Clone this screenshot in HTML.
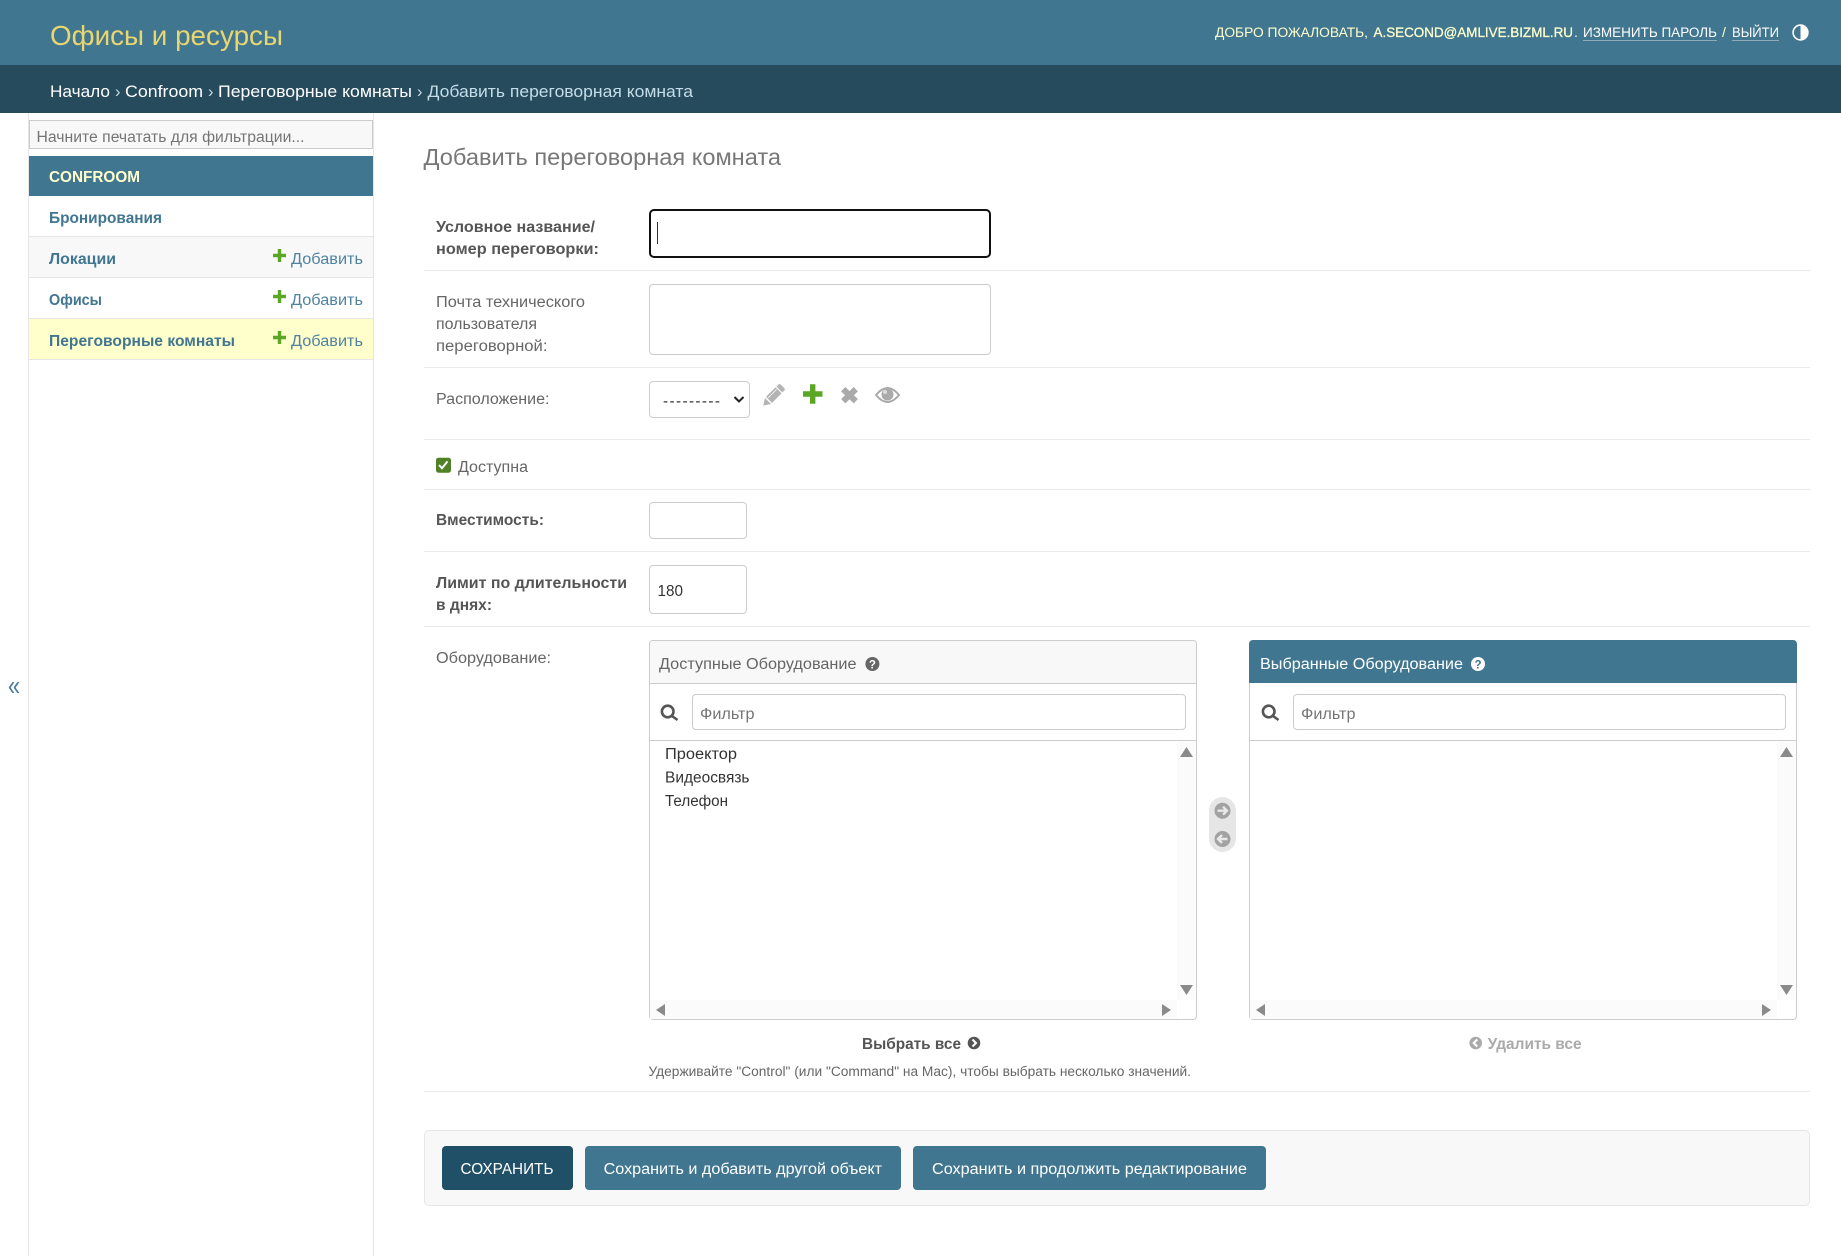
<!DOCTYPE html>
<html lang="ru">
<head>
<meta charset="utf-8">
<title>Добавить переговорная комната</title>
<style>
html,body{margin:0;padding:0;background:#fff}
body{position:relative;width:1841px;height:1256px;overflow:hidden;font-family:"Liberation Sans","Noto Sans CJK SC",sans-serif}
.b{position:absolute;box-sizing:border-box}
input.b{margin:0;padding:0;background:#fff;outline:none;border:1px solid #ccc;border-radius:4px}
.sep{position:absolute;left:424px;width:1386px;height:1px;background:#eaeaea}
.btn{position:absolute;top:1146px;height:44px;border-radius:4px;background:#417690}
svg{position:absolute;left:0;top:0}
text{font-family:"Liberation Sans","Noto Sans CJK SC",sans-serif;font-size:15.3px}
.l{fill:#666}.s{fill:#555;font-weight:700}
.n{fill:#417690;font-weight:700}.a{fill:#4f83a0}
.h{font-size:14.1px;fill:#ffc}
.c{font-size:16.4px;fill:#fff}
.w{fill:#fff}
</style>
</head>
<body>
<div class="b" style="left:0;top:0;width:1841px;height:65px;background:#417690"></div>
<div class="b" style="left:0;top:65px;width:1841px;height:48px;background:#264b5d"></div>

<div class="b" style="left:28px;top:113px;width:346px;height:1143px;border-left:1px solid #e6e6e6;border-right:1px solid #e6e6e6"></div>
<input class="b" style="left:29px;top:120px;width:344px;height:29px;background:#f8f8f8;border-radius:0;border:1px solid #ccc">
<div class="b" style="left:29px;top:156px;width:344px;height:40px;background:#417690"></div>
<div class="b" style="left:29px;top:196px;width:344px;height:41px;border-bottom:1px solid #e6e6e6"></div>
<div class="b" style="left:29px;top:237px;width:344px;height:41px;background:#f8f8f8;border-bottom:1px solid #e6e6e6"></div>
<div class="b" style="left:29px;top:278px;width:344px;height:41px;border-bottom:1px solid #e6e6e6"></div>
<div class="b" style="left:29px;top:319px;width:344px;height:41px;background:#ffc;border-bottom:1px solid #e6e6e6"></div>

<input class="b" style="left:649px;top:209px;width:342px;height:49px;border:2px solid #111;border-radius:5px">
<div class="b" style="left:657px;top:222px;width:1px;height:22px;background:#333"></div>
<div class="sep" style="top:270px"></div>
<input class="b" style="left:649px;top:284px;width:342px;height:71px">
<div class="sep" style="top:367px"></div>
<div class="b" style="left:649px;top:381px;width:101px;height:37px;border:1px solid #ccc;border-radius:4px;background:#fff"></div>
<div class="sep" style="top:439px"></div>
<div class="sep" style="top:489px"></div>
<input class="b" style="left:649px;top:502px;width:98px;height:37px">
<div class="sep" style="top:551px"></div>
<input class="b" style="left:649px;top:565px;width:98px;height:49px">
<div class="sep" style="top:626px"></div>

<div class="b" style="left:649px;top:640px;width:548px;height:380px;border:1px solid #ccc;border-radius:4px;background:#fff"></div>
<div class="b" style="left:650px;top:641px;width:546px;height:43px;background:#f8f8f8;border-bottom:1px solid #ccc;border-radius:3px 3px 0 0"></div>
<input class="b" style="left:692px;top:694px;width:494px;height:36px">
<div class="b" style="left:650px;top:740px;width:546px;height:1px;background:#ccc"></div>
<div class="b" style="left:1177px;top:741px;width:19px;height:259px;background:#fbfbfb"></div>
<div class="b" style="left:650px;top:1000px;width:527px;height:19px;background:#fbfbfb"></div>

<div class="b" style="left:1249px;top:640px;width:548px;height:380px;border:1px solid #ccc;border-radius:4px;background:#fff"></div>
<div class="b" style="left:1249px;top:640px;width:548px;height:43px;background:#417690;border-radius:4px 4px 0 0"></div>
<input class="b" style="left:1293px;top:694px;width:493px;height:36px">
<div class="b" style="left:1250px;top:740px;width:546px;height:1px;background:#ccc"></div>
<div class="b" style="left:1777px;top:741px;width:19px;height:259px;background:#fbfbfb"></div>
<div class="b" style="left:1250px;top:1000px;width:527px;height:19px;background:#fbfbfb"></div>

<div class="b" style="left:1209px;top:797px;width:27px;height:55px;border-radius:14px;background:#e6e6e6"></div>
<div class="sep" style="top:1091px"></div>
<div class="b" style="left:424px;top:1130px;width:1386px;height:76px;background:#f8f8f8;border:1px solid #e6e6e6;border-radius:5px"></div>
<div class="btn" style="left:442px;width:131px;background:#205067"></div>
<div class="btn" style="left:585px;width:316px"></div>
<div class="btn" style="left:913px;width:353px"></div>

<svg width="1841" height="1256" viewBox="0 0 1841 1256" xmlns="http://www.w3.org/2000/svg">
<!-- header -->
<text x="50" y="45" textLength="233" lengthAdjust="spacingAndGlyphs" style="font-size:28.2px;fill:#e8d670">Офисы и ресурсы</text>
<text class="h" x="1215" y="37" textLength="153" lengthAdjust="spacingAndGlyphs">ДОБРО ПОЖАЛОВАТЬ,</text>
<text class="h" x="1373.5" y="37" textLength="199.5" lengthAdjust="spacingAndGlyphs" style="stroke:#ffc;stroke-width:.3">A.SECOND@AMLIVE.BIZML.RU</text>
<text class="h" x="1574" y="37">.</text>
<text class="h" x="1583" y="37" textLength="134" lengthAdjust="spacingAndGlyphs" style="fill:#fff">ИЗМЕНИТЬ ПАРОЛЬ</text>
<text class="h" x="1722" y="37" style="fill:#ffc">/</text>
<text class="h" x="1732" y="37" textLength="47" lengthAdjust="spacingAndGlyphs" style="fill:#fff">ВЫЙТИ</text>
<rect x="1583" y="40" width="134" height="1" fill="#8fabb9"/>
<rect x="1732" y="40" width="47" height="1" fill="#8fabb9"/>
<circle cx="1800.5" cy="32.5" r="7.4" fill="none" stroke="#fff" stroke-width="1.6"/>
<path d="M1800.5 25a7.5 7.5 0 0 1 0 15z" fill="#fff"/>
<!-- breadcrumbs -->
<text class="c" x="50" y="97" textLength="60" lengthAdjust="spacingAndGlyphs">Начало</text>
<text class="c" x="115" y="97" style="fill:#c4dce8">›</text>
<text class="c" x="125" y="97" textLength="78" lengthAdjust="spacingAndGlyphs">Confroom</text>
<text class="c" x="208" y="97" style="fill:#c4dce8">›</text>
<text class="c" x="218" y="97" textLength="194" lengthAdjust="spacingAndGlyphs">Переговорные комнаты</text>
<text class="c" x="417" y="97" style="fill:#c4dce8">›</text>
<text class="c" x="427.5" y="97" textLength="265.5" lengthAdjust="spacingAndGlyphs" style="fill:#c4dce8">Добавить переговорная комната</text>
<!-- sidebar -->
<text x="36.5" y="142" textLength="268" lengthAdjust="spacingAndGlyphs" style="fill:#757575">Начните печатать для фильтрации...</text>
<text x="49" y="182" textLength="91" lengthAdjust="spacingAndGlyphs" style="fill:#ffffcc;font-weight:700;font-size:15.3px">CONFROOM</text>
<text class="n" x="49" y="223" textLength="113" lengthAdjust="spacingAndGlyphs">Бронирования</text>
<text class="n" x="49" y="264" textLength="67" lengthAdjust="spacingAndGlyphs">Локации</text>
<text class="n" x="49" y="305" textLength="53" lengthAdjust="spacingAndGlyphs">Офисы</text>
<text class="n" x="49" y="346" textLength="186" lengthAdjust="spacingAndGlyphs">Переговорные комнаты</text>
<text class="a" x="291" y="264" textLength="72" lengthAdjust="spacingAndGlyphs">Добавить</text>
<text class="a" x="291" y="305" textLength="72" lengthAdjust="spacingAndGlyphs">Добавить</text>
<text class="a" x="291" y="346" textLength="72" lengthAdjust="spacingAndGlyphs">Добавить</text>
<g fill="none" stroke="#5ca625" stroke-width="3.4">
<path d="M273 255.5h13M279.5 249v13"/>
<path d="M273 296.5h13M279.5 290v13"/>
<path d="M273 337.5h13M279.5 331v13"/>
</g>
<text x="8" y="695" textLength="12" lengthAdjust="spacingAndGlyphs" style="font-size:28px;fill:#447e9b">«</text>
<!-- main -->
<text x="423.5" y="165" textLength="357.5" lengthAdjust="spacingAndGlyphs" style="font-size:23.5px;fill:#777">Добавить переговорная комната</text>
<text class="s" x="436" y="232" textLength="159" lengthAdjust="spacingAndGlyphs">Условное название/</text>
<text class="s" x="436" y="254" textLength="163" lengthAdjust="spacingAndGlyphs">номер переговорки:</text>
<text class="l" x="436" y="307" textLength="149" lengthAdjust="spacingAndGlyphs">Почта технического</text>
<text class="l" x="436" y="329" textLength="101" lengthAdjust="spacingAndGlyphs">пользователя</text>
<text class="l" x="436" y="351" textLength="111.5" lengthAdjust="spacingAndGlyphs">переговорной:</text>
<text class="l" x="436" y="404" textLength="113.5" lengthAdjust="spacingAndGlyphs">Расположение:</text>
<text x="663" y="406" textLength="57" lengthAdjust="spacing" style="fill:#333">---------</text>
<path d="M734.5 397l4.5 4.5 4.5-4.5" fill="none" stroke="#222" stroke-width="2"/>
<!-- related icons -->
<g fill="#b4b4b4" stroke="none">
<path d="M763.2 405.6l1.8-7.6 6 6z"/>
<path d="M766 396.8l12.6-12.4q1-.8 1.9 0l4 4q.8 1 0 1.9L772 403z"/>
</g>
<path d="M775.5 386.5l7 7" stroke="#fff" stroke-width="1.2" fill="none"/>
<path d="M768 398l8.5-8.5" stroke="#fff" stroke-width=".8" fill="none"/>
<path d="M803 394h19.5M812.7 384.2v19.6" stroke="#5ca625" stroke-width="5.4" fill="none" stroke-linejoin="round"/>
<path d="M843.2 389.2l12.6 12M855.8 389.2l-12.600 12" stroke="#aaa" stroke-width="6" fill="none"/>
<path d="M876 395q11.500-14 23 0q-11.500 14-23 0z" fill="#fff" stroke="#aaa" stroke-width="2"/>
<circle cx="887.500" cy="394.500" r="6" fill="#aaa"/>
<circle cx="885" cy="392" r="2" fill="#ddd"/>
<!-- checkbox -->
<rect x="436" y="457.700" width="15" height="15" rx="2.500" fill="#4f8127"/>
<path d="M439 465l3 3.200 5.500-6.800" fill="none" stroke="#fff" stroke-width="2"/>
<text class="l" x="458" y="472" textLength="70" lengthAdjust="spacingAndGlyphs">Доступна</text>
<text class="s" x="436" y="525" textLength="108" lengthAdjust="spacingAndGlyphs">Вместимость:</text>
<text class="s" x="436" y="588" textLength="191" lengthAdjust="spacingAndGlyphs">Лимит по длительности</text>
<text class="s" x="436" y="610" textLength="56" lengthAdjust="spacingAndGlyphs">в днях:</text>
<text x="657.500" y="596" textLength="25.500" lengthAdjust="spacingAndGlyphs" style="fill:#333">180</text>
<text class="l" x="436" y="663" textLength="115" lengthAdjust="spacingAndGlyphs">Оборудование:</text>
<!-- selector -->
<text class="l" x="659" y="669" textLength="197.500" lengthAdjust="spacingAndGlyphs">Доступные Оборудование</text>
<circle cx="872.400" cy="664" r="7" fill="#666"/>
<text x="872.400" y="668.300" text-anchor="middle" style="font-size:11.500px;font-weight:700;fill:#fff">?</text>
<text class="w" x="1260" y="669" textLength="203" lengthAdjust="spacingAndGlyphs">Выбранные Оборудование</text>
<circle cx="1478" cy="664" r="7" fill="#fff"/>
<text x="1478" y="668.300" text-anchor="middle" style="font-size:11.500px;font-weight:700;fill:#417690">?</text>
<g fill="none" stroke="#555" stroke-width="2.600">
<circle cx="667.700" cy="711.500" r="5.800"/><path d="M672 716l5.500 4"/>
<circle cx="1268.700" cy="711.500" r="5.800"/><path d="M1273 716l5.500 4"/>
</g>
<text x="700" y="719" textLength="54.500" lengthAdjust="spacingAndGlyphs" style="fill:#757575">Фильтр</text>
<text x="1301" y="719" textLength="54.500" lengthAdjust="spacingAndGlyphs" style="fill:#757575">Фильтр</text>
<text x="665" y="759" textLength="72" lengthAdjust="spacingAndGlyphs" style="fill:#333">Проектор</text>
<text x="665" y="782.500" textLength="84.500" lengthAdjust="spacingAndGlyphs" style="fill:#333">Видеосвязь</text>
<text x="665" y="806" textLength="63" lengthAdjust="spacingAndGlyphs" style="fill:#333">Телефон</text>
<g fill="#8a8a8a">
<path d="M1186.500 747l6.500 10h-13z"/><path d="M1186.500 995l-6.500-10h13z"/>
<path d="M656 1010l9-6v12z"/><path d="M1171 1010l-9-6v12z"/>
<path d="M1786.500 747l6.500 10h-13z"/><path d="M1786.500 995l-6.500-10h13z"/>
<path d="M1256 1010l9-6v12z"/><path d="M1771 1010l-9-6v12z"/>
</g>
<circle cx="1222.500" cy="810.700" r="8" fill="#a2a2a2"/>
<path d="M1217.500 810.700h9M1223 806.700l4 4-4 4" fill="none" stroke="#e8e8e8" stroke-width="2.400"/>
<circle cx="1222.500" cy="839" r="8" fill="#a2a2a2"/>
<path d="M1227.500 839h-9M1222 835l-4 4 4 4" fill="none" stroke="#e8e8e8" stroke-width="2.400"/>
<text class="s" x="862" y="1049" textLength="99" lengthAdjust="spacingAndGlyphs" style="fill:#555">Выбрать все</text>
<circle cx="974" cy="1043" r="6.300" fill="#555"/>
<path d="M972.500 1039.500l3.500 3.500-3.500 3.500" fill="none" stroke="#fff" stroke-width="2"/>
<circle cx="1475.700" cy="1043" r="6.300" fill="#aaa"/>
<path d="M1477.200 1039.500l-3.500 3.500 3.500 3.500" fill="none" stroke="#fff" stroke-width="2"/>
<text x="1487.600" y="1049" textLength="94" lengthAdjust="spacingAndGlyphs" style="fill:#aaa;font-weight:700">Удалить все</text>
<text x="648.500" y="1076" textLength="542.500" lengthAdjust="spacingAndGlyphs" style="font-size:13.500px;fill:#666">Удерживайте "Control" (или "Command" на Mac), чтобы выбрать несколько значений.</text>
<!-- buttons -->
<text class="w" x="460.500" y="1174" textLength="93" lengthAdjust="spacingAndGlyphs">СОХРАНИТЬ</text>
<text class="w" x="603.600" y="1174" textLength="278.400" lengthAdjust="spacingAndGlyphs">Сохранить и добавить другой объект</text>
<text class="w" x="932" y="1174" textLength="315" lengthAdjust="spacingAndGlyphs">Сохранить и продолжить редактирование</text>
</svg>
</body>
</html>
